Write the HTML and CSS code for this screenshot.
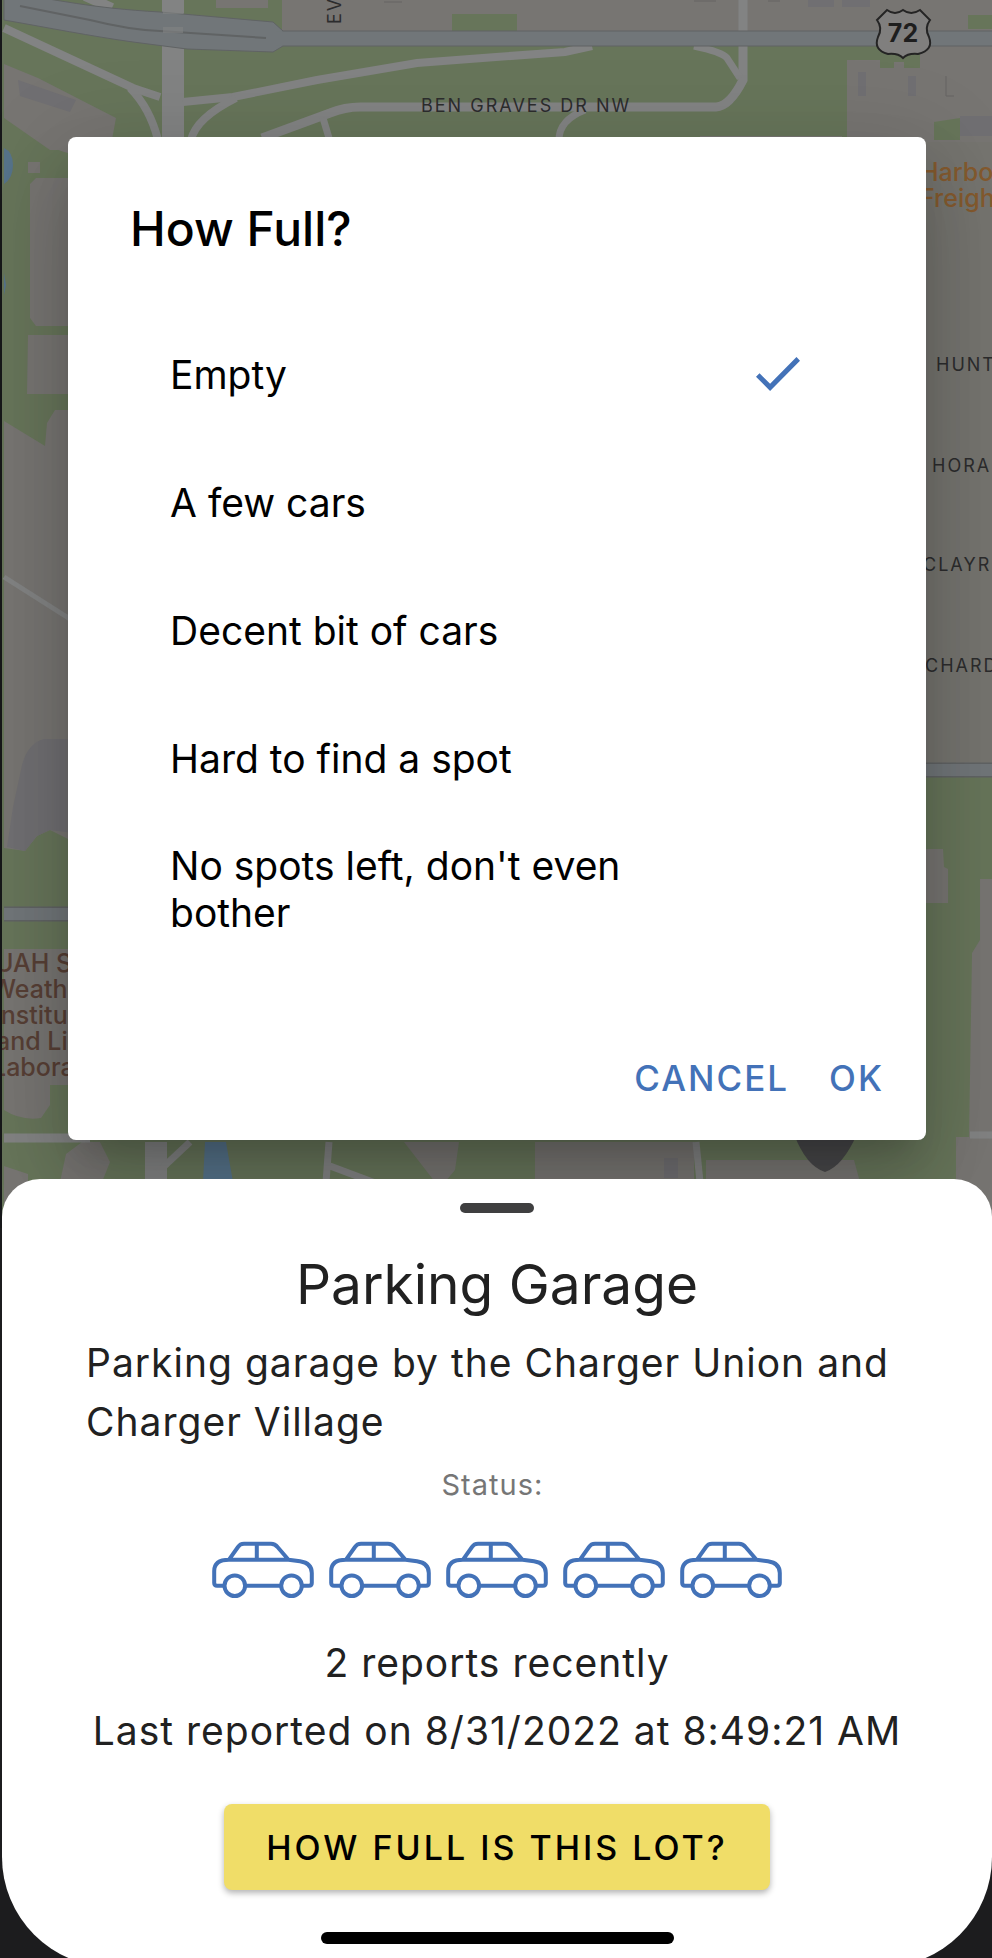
FILE: index.html
```html
<!DOCTYPE html>
<html lang="en">
<head>
<meta charset="utf-8">
<meta name="viewport" content="width=device-width, initial-scale=1">
<title>Parking Garage</title>
<link rel="stylesheet" href="styles.css">
</head>
<body>
<div class="screen">
  <div class="stage">
    <svg class="map" viewBox="0 0 992 1230" preserveAspectRatio="xMidYMin slice" aria-hidden="true">
      <rect class="ground" width="992" height="1230"/>
      <!-- parks and lawns -->
      <path class="park" d="M0 0H282V32H452V14H517V46H842V136H700V1230H0Z"/>
      <path class="park" d="M842 46h78v22h-16v-6h-10v6h-14v-8h-33v78h-5zM968 15h24v14h-24z"/>
      <!-- blocks of built-up land -->
      <path class="ground" d="M216 0h52v8h-52zM4 64l34 14 78 40 -6 32H50L4 118zM25 130h60v24C60 156 42 142 25 130zM28 162h12v11H28zM36 178h60v148H36l-6-8V184zM28 335h60v59H27z"/>
      <path class="ground" d="M4 421L45 446L47 423L55 410H90V836L68 839L50 830L37 836L25 851L4 848ZM4 949h80v136H50v20l-9 13q-20 3-37-8zM4 1166l24 8v30H4zM66 1154l16-12h18l10 20-8 20H60z"/>
      <path class="ground" d="M535 1142h159v40H535zM700 1142h160l-10 18H706zM404 1142h55l-4 28-10 12h-10z"/>
      <path class="shade" d="M18 80l58 20-6 12-50-16zM22 765q6-22 22-26h30v94l-24-3-13 6-12 15-18-4 6-40zM858 72h8v24h-8zM908 76h8v20h-8zM960 116h32v20h-32zM664 1158h14v20h-14zM808 0h26v7h-26zM842 0h28v7h-28z"/>
      <path class="water" d="M4 148q9 4 9 17t-9 19zM4 273v22l2-10zM205 1142h21l7 40h-30z"/>
      <path class="field" d="M920 142h72v622h-72z"/>
      <path class="park" d="M934 122l26-4v22h-26zM700 774H992V879H980V940L972 953L969 1137H956V1182H860L854 1160H706V1182H700Z"/>
      <path class="ground" d="M920 849h23l1 18 4 2v34H920z"/>
      <!-- local roads -->
      <g class="road">
        <path d="M173 0V140" stroke-width="22"/>
        <path d="M4 28L133 88L160 97M183 102L233 97L317 80L417 63L496 57L565 52L592 46" stroke-width="8"/>
        <path d="M130 88Q150 108 158 140M191 140Q196 118 236 98" stroke-width="8"/>
        <path d="M262 138L330 113Q345 107 360 107H716Q730 106 743 80V0" stroke-width="9"/>
        <path d="M694 46Q722 52 727 58L740 78M323 118l6 20M559 140q0-20 26-30" stroke-width="7"/>
        <path d="M85 -4L112 8" stroke-width="10"/>
        <path d="M4 577L70 619" stroke-width="5"/>
        <path d="M4 1138H90" stroke-width="9"/>
        <path d="M156 1142V1182" stroke-width="22"/>
        <path d="M190 1142l-32 30M329 1142l-3 40M330 1166l48 18M696 1142l4 40M970 1135h22" stroke-width="7"/>
      </g>
      <!-- highways with edge lines -->
      <g class="highway-edge">
        <path d="M270 38.500H992" stroke-width="16"/>
        <path d="M4 914H90M920 770H992" stroke-width="15"/>
      </g>
      <path class="interchange" d="M4 -8C60 0 90 8 160 12L273 22L283 31V46L273 52L187 49L133 42C90 36 50 28 4 20Z"/>
      <g class="highway">
        <path d="M276 38.500H992" stroke-width="14"/>
        <path d="M4 914H90M920 770H992" stroke-width="12"/>
      </g>
      <path class="median" d="M20 6L90 20Q130 30 160 31L266 38"/>
      <path class="road" d="M173 0V14M173 27V33" stroke-width="20" opacity=".6"/>
      <path class="outline" d="M946 76v20h8M384 2h18M694 1h22M768 1h12"/>
      <path class="pin" d="M794 1134q12 32 31 38q18-6 32-38z"/>
      <!-- route shield -->
      <path class="shield" d="M877 20L887 10Q895 16 903 10Q911 16 920 10L930 20Q924 28 929 37Q934 50 918 54Q908 53 903 58Q898 53 888 54Q873 50 878 37Q883 28 877 20Z"/>
      <text class="shield-text" x="903" y="42">72</text>
      <!-- street and place names -->
      <text class="street" x="421" y="112">BEN GRAVES DR NW</text>
      <text class="street" transform="translate(341 24) rotate(-90)">EV</text>
      <text class="street" x="936" y="371">HUNT</text>
      <text class="street" x="932" y="472">HORA</text>
      <text class="street" x="923" y="571">CLAYR</text>
      <text class="street" x="925" y="672">CHARD</text>
      <g class="store">
        <text x="920" y="181">Harbo</text>
        <text x="920" y="207">Freigh</text>
      </g>
      <g class="place">
        <text x="-5" y="972">UAH S</text>
        <text x="-9" y="998">Weath</text>
        <text x="-6" y="1024">Institu</text>
        <text x="-4" y="1050">and Li</text>
        <text x="-8" y="1076">Labora</text>
      </g>
      <rect class="edge" width="2" height="1230"/>
    </svg>

    <form class="dialog" role="dialog" aria-labelledby="dialog-title">
      <h2 class="dialog-title" id="dialog-title">How Full?</h2>
      <div class="options" role="radiogroup" aria-labelledby="dialog-title">
        <label class="option"><span class="option-text">Empty</span><input class="option-check" type="radio" name="fullness" value="0" checked></label>
        <label class="option"><span class="option-text">A few cars</span><input class="option-check" type="radio" name="fullness" value="1"></label>
        <label class="option"><span class="option-text">Decent bit of cars</span><input class="option-check" type="radio" name="fullness" value="2"></label>
        <label class="option"><span class="option-text">Hard to find a spot</span><input class="option-check" type="radio" name="fullness" value="3"></label>
        <label class="option"><span class="option-text">No spots left, don't even bother</span><input class="option-check" type="radio" name="fullness" value="4"></label>
      </div>
      <div class="actions">
        <button class="action" type="button">CANCEL</button>
        <button class="action" type="button">OK</button>
      </div>
    </form>
  </div>

  <main class="sheet">
    <div class="handle"></div>
    <h1 class="lot-name">Parking Garage</h1>
    <p class="description">Parking garage by the Charger Union and Charger Village</p>
    <p class="status">Status: </p>
    <svg class="symbols" aria-hidden="true">
      <symbol id="car" viewBox="0 0 102 58">
        <path d="M12 44.700H5Q2.200 44.700 2.200 42V30C2.200 23 7 18.700 17 18.700L26 6Q28 2.700 32 2.700H59Q63 2.700 65.500 6L76.500 18.700L88 20.300C96 21.500 99.800 25 99.800 32V42Q99.800 44.700 97 44.700H90M33.500 44.700H69M17 18.700H76.500M44.800 2.700V18.700"/>
        <circle cx="22.800" cy="44.700" r="10.300"/>
        <circle cx="79.500" cy="44.700" r="10.300"/>
      </symbol>
    </svg>
    <div class="cars" role="img" aria-label="Five cars">
      <svg class="car"><use href="#car"/></svg>
      <svg class="car"><use href="#car"/></svg>
      <svg class="car"><use href="#car"/></svg>
      <svg class="car"><use href="#car"/></svg>
      <svg class="car"><use href="#car"/></svg>
    </div>
    <p class="report">2 reports recently</p>
    <p class="report report-last">Last reported on 8/31/2022 at 8:49:21 AM</p>
    <button class="report-button" type="button">HOW FULL IS THIS LOT?</button>
    <div class="home-indicator"></div>
  </main>
</div>
</body>
</html>
```
FILE: styles.css
```css
* {
  box-sizing: border-box;
}

body {
  margin: 0;
  background: #1c1c1e;
  color: #212121;
  font-family: Inter, "Liberation Sans", sans-serif;
}

h1, h2, p {
  margin: 0;
}

button {
  border: 0;
  font-family: inherit;
  cursor: pointer;
}

.screen {
  display: flex;
  flex-direction: column;
  min-height: 100vh;
  overflow: hidden;
}

/* Map behind the dialog */
.stage {
  position: relative;
  padding: 137px 66px 88px 68px;
}

.map {
  position: absolute;
  inset: 0;
  width: 100%;
  height: 100%;
}

.ground { fill: #777572; }
.park { fill: #67755a; }
.water { fill: #56738a; }
.shade { fill: #706f72; }
.field { fill: #75746f; }
.edge { fill: #17181a; }
.pin { fill: #48484a; }
.road { fill: none; stroke: #828383; }
.highway { fill: none; stroke: #717679; }
.highway-edge { fill: none; stroke: #606364; }
.interchange { fill: #717679; stroke: #606364; stroke-width: 1; }
.median { fill: none; stroke: #606364; stroke-width: 2; }
.outline { fill: none; stroke: #666462; stroke-width: 1; }
.shield { fill: #807f7e; stroke: #242424; stroke-width: 2; }

.shield-text {
  fill: #1e1e1e;
  font-size: 25px;
  font-weight: 700;
  text-anchor: middle;
}

.street {
  fill: #2c2c2d;
  font-size: 18px;
  letter-spacing: 2px;
}

.store, .place {
  font-size: 25px;
  font-weight: 500;
}

.store { fill: #845a2e; }
.place { fill: #573f35; }

/* Dialog */
.dialog {
  position: relative;
  padding: 62px 36px 26px 62px;
  border-radius: 8px;
  background: #fff;
  color: #000;
  box-shadow: 0 22px 30px -14px rgba(0, 0, 0, .16), 0 48px 76px 6px rgba(0, 0, 0, .12), 0 18px 92px 16px rgba(0, 0, 0, .1);
}

.dialog-title {
  font-size: 48px;
  font-weight: 500;
  line-height: 60px;
}

.options {
  padding: 51px 90px 0 40px;
}

.option {
  display: flex;
  align-items: center;
  justify-content: space-between;
  gap: 96px;
  min-height: 128px;
  padding: 20px 0;
  font-size: 39px;
  line-height: 47px;
}

.option-check {
  flex: none;
  width: 44px;
  height: 34px;
  margin: 0;
  appearance: none;
  clip-path: polygon(32% 79%, 8% 48%, 0 58%, 32% 100%, 100% 11%, 92% 0);
}

.option-check:checked {
  background: #4372b8;
}

.actions {
  display: flex;
  justify-content: flex-end;
  gap: 28px;
  padding-top: 86px;
}

.action {
  height: 72px;
  padding: 0 6px;
  background: none;
  color: #4372b8;
  font-size: 35px;
  font-weight: 500;
  letter-spacing: 2px;
}

/* Bottom sheet */
.sheet {
  position: relative;
  display: flex;
  flex: 1;
  flex-direction: column;
  align-items: center;
  margin: -49px 0 -9px 2px;
  padding: 24px 84px 22px;
  border-radius: 38px 38px 110px 110px;
  background: #fff;
}

.handle {
  width: 74px;
  height: 10px;
  border-radius: 5px;
  background: #3f3f40;
}

.lot-name {
  margin-top: 36px;
  font-size: 55px;
  font-weight: 400;
  line-height: 70px;
}

.description {
  align-self: stretch;
  margin-top: 14px;
  font-size: 39px;
  line-height: 59px;
  letter-spacing: 1px;
}

.status {
  margin-top: 15px;
  color: #767676;
  font-size: 29px;
  line-height: 38px;
  letter-spacing: 1px;
  white-space: pre;
}

.symbols {
  position: absolute;
  width: 0;
  height: 0;
}

.cars {
  display: flex;
  gap: 15px;
  margin-top: 37px;
}

.car {
  width: 102px;
  height: 58px;
  fill: none;
  stroke: #4372b8;
  stroke-width: 4;
  stroke-linejoin: round;
}

.report {
  margin-top: 36px;
  font-size: 39px;
  line-height: 56px;
  letter-spacing: 1px;
}

.report-last {
  margin-top: 12px;
}

.report-button {
  height: 86px;
  margin-top: 45px;
  padding: 0 42px;
  border-radius: 8px;
  background: #f0dd68;
  color: #000;
  font-size: 34px;
  font-weight: 500;
  letter-spacing: 3px;
  box-shadow: 0 3px 6px rgba(0, 0, 0, .3);
}

.home-indicator {
  width: 353px;
  max-width: 60%;
  height: 12px;
  margin-top: 42px;
  border-radius: 6px;
  background: #000;
}
```
